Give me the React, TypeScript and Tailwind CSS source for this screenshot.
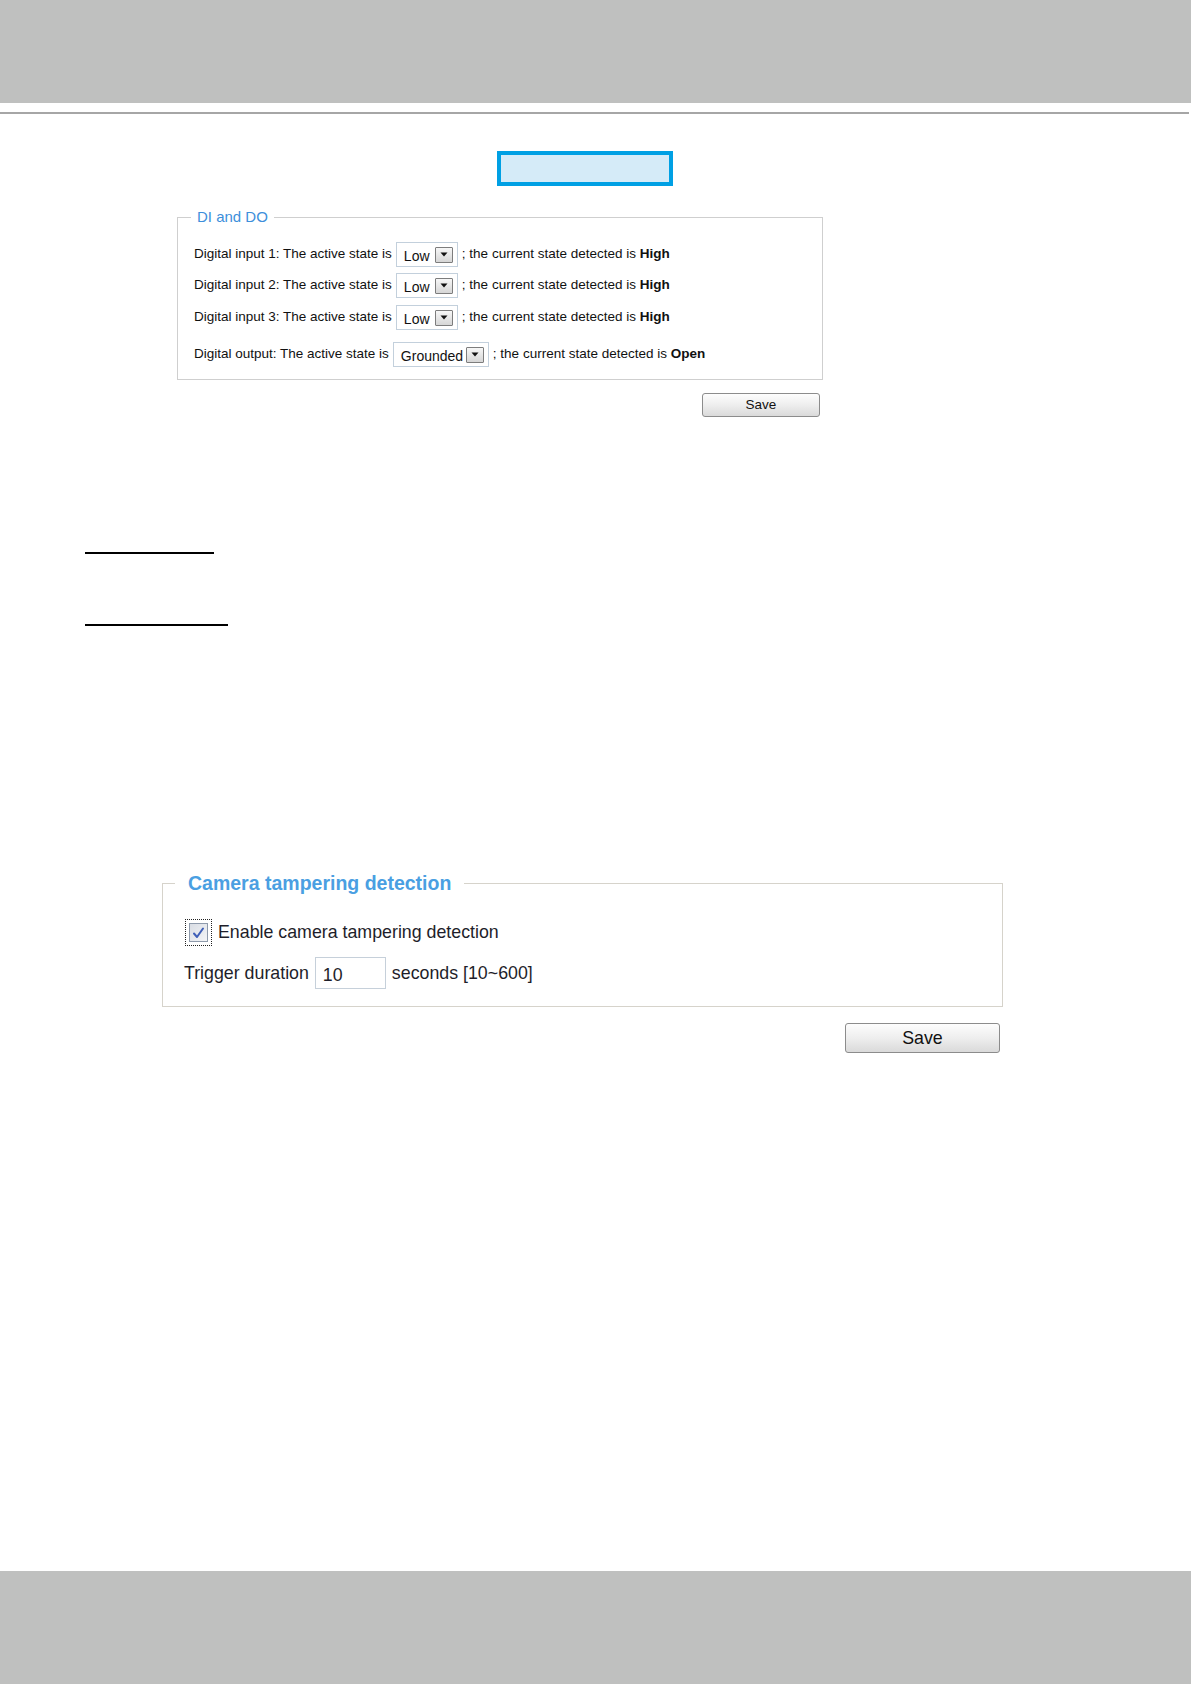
import React from "react";

const font = { fontFamily: '"Liberation Sans", Arial, sans-serif' };

function DropArrow() {
  return (
    <span className="flex h-[16px] w-[18px] items-center justify-center rounded-[1px] border border-[#7d7d7d] bg-gradient-to-b from-[#f7f7f7] to-[#d6d6d6]">
      <svg width="8" height="5" viewBox="0 0 8 5">
        <path d="M0.5 0.5 L7.5 0.5 L4 4.5 Z" fill="#111" />
      </svg>
    </span>
  );
}

function FakeSelect({ value, width }: { value: string; width: string }) {
  return (
    <span className={`mx-[4px] flex h-[25px] ${width} items-center justify-between border border-[#c3d0dc] bg-white pl-[7px] pr-[4px]`}>
      <span className="pt-[4px] text-[14px] text-[#111]">{value}</span>
      <DropArrow />
    </span>
  );
}

function DiRow({ label, value, width, state, className = "" }: { label: string; value: string; width: string; state: string; className?: string }) {
  return (
    <div className={`flex h-[25px] items-center text-[13.5px] text-[#111] ${className}`}>
      <span>{label}</span>
      <FakeSelect value={value} width={width} />
      <span>
        ; the current state detected is <b>{state}</b>
      </span>
    </div>
  );
}

function SaveButton({ className }: { className: string }) {
  return (
    <button className={`rounded-[3px] border border-[#8c8c8c] bg-gradient-to-b from-[#fdfdfd] via-[#eeeeee] to-[#dadada] text-[#111] ${className}`}>
      Save
    </button>
  );
}

export default function App() {
  return (
    <div className="flex min-h-[1684px] w-[1191px] flex-col bg-white" style={font}>
      {/* header band */}
      <div className="h-[103px] bg-[#bfc0bf]" />
      <div className="mr-[2px] mt-[9px] h-[2px] bg-[#a6a6a6]" />

      {/* highlighted tab */}
      <div className="ml-[497px] mt-[37px] h-[35px] w-[176px] border-4 border-[#00a0e4] bg-[#d5ebf8]" />

      {/* DI and DO */}
      <fieldset className="ml-[177px] mt-[23px] w-[646px] border border-[#cfcfcf] pb-[12px] pt-[17px]">
        <legend className="ml-[13px] px-[6px] text-[15px] leading-[16px] text-[#3d8fdb]">DI and DO</legend>
        <div className="pl-[16px]">
          <DiRow label="Digital input 1: The active state is" value="Low" width="w-[62px]" state="High" />
          <DiRow label="Digital input 2: The active state is" value="Low" width="w-[62px]" state="High" className="mt-[6px]" />
          <DiRow label="Digital input 3: The active state is" value="Low" width="w-[62px]" state="High" className="mt-[7px]" />
          <DiRow label="Digital output: The active state is" value="Grounded" width="w-[96px]" state="Open" className="mt-[12px]" />
        </div>
      </fieldset>
      <div className="ml-[702px] mt-[12px]">
        <SaveButton className="h-[24px] w-[118px] text-[13.5px]" />
      </div>

      {/* underlined links */}
      <div className="ml-[85px] mt-[135px] h-[2px] w-[129px] bg-black" />
      <div className="ml-[85px] mt-[70px] h-[2px] w-[143px] bg-black" />

      {/* Camera tampering detection */}
      <fieldset className="ml-[162px] mt-[246px] w-[841px] border border-[#d6d3cb] pb-[17px] pt-[25px] text-[17.8px] text-[#1e1e2a]">
        <legend className="ml-[12px] px-[13px] text-[19.5px] font-bold leading-[22px] text-[#4a9fe2]">Camera tampering detection</legend>
        <div className="pl-[22px]">
          <div className="flex h-[27px] items-center">
            <span className="flex h-[27px] w-[27px] items-center justify-center border border-dotted border-[#222]">
              <span className="flex h-[19px] w-[19px] items-center justify-center border border-[#8e9aab] bg-gradient-to-br from-[#d9dde4] to-[#f4f5f7]">
                <svg width="13" height="12" viewBox="0 0 13 12">
                  <path d="M2 6.5 L5 10 L11 1.5" fill="none" stroke="#3f5fb8" strokeWidth="2" strokeLinejoin="round" strokeLinecap="round" />
                </svg>
              </span>
            </span>
            <span className="ml-[6px]">Enable camera tampering detection</span>
          </div>
          <div className="mt-[11px] flex h-[32px] items-center">
            <span className="-ml-[1px]">Trigger duration</span>
            <span className="ml-[6px] flex h-[32px] w-[71px] items-center border border-[#c6d0da] pl-[7px] pt-[4px]">10</span>
            <span className="ml-[6px]">seconds [10~600]</span>
          </div>
        </div>
      </fieldset>
      <div className="ml-[845px] mt-[16px]">
        <SaveButton className="h-[30px] w-[155px] text-[17.8px]" />
      </div>

      {/* footer band */}
      <div className="mt-auto h-[113px] bg-[#bfc0bf]" />
    </div>
  );
}
